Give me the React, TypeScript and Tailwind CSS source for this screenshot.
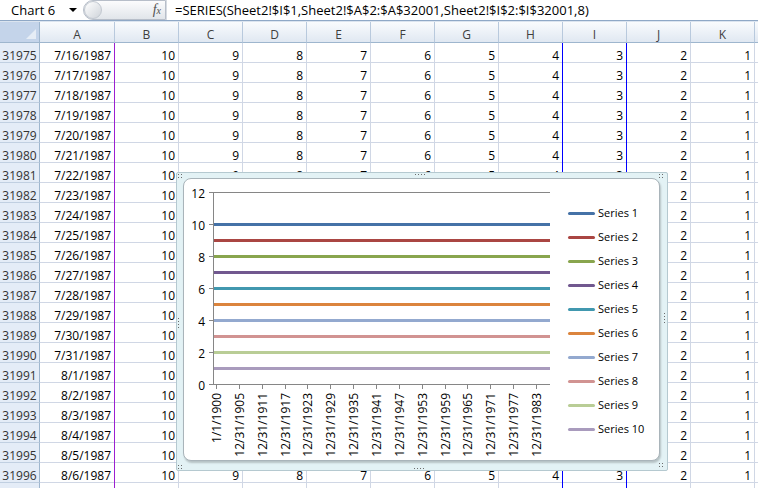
import React from "react";

const COLS = ["A", "B", "C", "D", "E", "F", "G", "H", "I", "J", "K"];
const ROWS = Array.from({ length: 23 }, (_, i) => 31975 + i);
const SERIES = [
  "#4572a7",
  "#aa4643",
  "#89a54e",
  "#71588f",
  "#4198af",
  "#db843d",
  "#93a9cf",
  "#d19392",
  "#b9cd96",
  "#a99bbd",
];
const XLABELS = [
  "1/1/1900",
  ...Array.from({ length: 14 }, (_, k) => `12/31/${1905 + 6 * k}`),
];

function dateFor(i: number) {
  const d = new Date(Date.UTC(1987, 6, 16 + i));
  return `${d.getUTCMonth() + 1}/${d.getUTCDate()}/${d.getUTCFullYear()}`;
}

function Dots({ vertical, className }: { vertical?: boolean; className: string }) {
  return (
    <div className={`absolute flex ${vertical ? "flex-col" : "flex-row"} gap-[2px] ${className}`}>
      {[0, 1, 2, 3].map((i) => (
        <span key={i} className="block w-[1px] h-[1px] bg-[#6b6b6b]" />
      ))}
    </div>
  );
}

function Corner({ className }: { className: string }) {
  return (
    <div className={`absolute grid grid-cols-2 gap-[2px] ${className}`}>
      {[0, 1, 2, 3].map((i) => (
        <span key={i} className="block w-[1px] h-[1px] bg-[#6b6b6b]" />
      ))}
    </div>
  );
}

function Chart() {
  const yOf = (v: number) => 206 - 16 * v;
  return (
    <div className="absolute left-[176px] top-[172px] w-[492px] h-[299px] border border-[#b5c9d0] bg-[#e3f2f5] rounded-[2px] pl-[6px] pt-[5px]">
      <Corner className="left-[1px] top-[1px]" />
      <Dots className="left-[238px] top-[1px]" />
      <Corner className="left-[482px] top-[1px]" />
      <Dots vertical className="left-[1px] top-[145px]" />
      <Dots vertical className="left-[487px] top-[140px]" />
      <Corner className="left-[1px] top-[292px]" />
      <Dots className="left-[237px] top-[295px]" />
      <Corner className="left-[482px] top-[290px]" />
      <div className="w-[477px] h-[283px] bg-white rounded-[8px] border border-[#a9b4ba] shadow-[1px_2px_2px_rgba(0,0,0,0.2)] flex flex-row overflow-hidden">
        <svg width={385} height={281} className="shrink-0 -mt-[1px] -ml-[1px]" style={{ fontFamily: "'Open Sans', sans-serif" }}>
          {[12, 10, 8, 6, 4, 2].map((v) => (
            <line key={v} x1={30} x2={367} y1={yOf(v) + 0.5} y2={yOf(v) + 0.5} stroke="#868686" strokeWidth={1} />
          ))}
          {[12, 10, 8, 6, 4, 2, 0].map((v) => (
            <line key={"t" + v} x1={26} x2={30} y1={yOf(v) + 0.5} y2={yOf(v) + 0.5} stroke="#868686" strokeWidth={1} />
          ))}
          <line x1={30.5} x2={30.5} y1={14} y2={207} stroke="#868686" strokeWidth={1} />
          <line x1={30} x2={367} y1={206.5} y2={206.5} stroke="#868686" strokeWidth={1} />
          {XLABELS.map((_, i) => {
            const x = Math.round(33 + 22.86 * i) + 0.5;
            return <line key={"x" + i} x1={x} x2={x} y1={206} y2={211} stroke="#868686" strokeWidth={1} />;
          })}
          {SERIES.map((c, k) => (
            <line key={c} x1={31} x2={367} y1={yOf(10 - k) + 0.5} y2={yOf(10 - k) + 0.5} stroke={c} strokeWidth={3} />
          ))}
          {[12, 10, 8, 6, 4, 2, 0].map((v) => (
            <text key={"l" + v} x={22} y={yOf(v) + 1} textAnchor="end" dominantBaseline="central" fontSize={12} fill="#000">
              {v}
            </text>
          ))}
          {XLABELS.map((t, i) => {
            const x = 33.5 + 22.86 * i;
            return (
              <text
                key={t}
                transform={`translate(${x} 215) rotate(-90)`}
                textAnchor="end"
                dominantBaseline="central"
                fontSize={12}
                fill="#000"
              >
                {t}
              </text>
            );
          })}
        </svg>
        <div className="flex flex-col pt-[22px]">
          {SERIES.map((c, k) => (
            <div key={c} className="h-[24px] flex flex-row items-center gap-[3px]">
              <span className="block w-[27px] h-[3px] rounded-full" style={{ backgroundColor: c }} />
              <span className="text-[11px] leading-[12px] text-black">Series {k + 1}</span>
            </div>
          ))}
        </div>
      </div>
    </div>
  );
}

export default function App() {
  return (
    <div className="relative w-[758px] h-[488px] overflow-hidden bg-white font-['Open_Sans',sans-serif] text-black">
      {/* Formula bar */}
      <div className="h-[20px] flex flex-row items-stretch bg-white">
        <div className="w-[83px] flex flex-row items-center pl-[11px] pr-[6px]">
          <span className="text-[13px] leading-[20px] text-black flex-1">Chart 6</span>
          <span className="block w-0 h-0 border-l-[4px] border-r-[4px] border-t-[4px] border-l-transparent border-r-transparent border-t-black" />
        </div>
        <div className="w-[83px] h-[20px] rounded-l-full border border-[#b7bec9] bg-linear-to-b from-[#fcfcfd] to-[#e1e5ea] flex flex-row items-center pr-[4px]">
          <span className="block w-[18px] h-[18px] rounded-full border border-[#c2c8d0] bg-linear-to-br from-[#ffffff] to-[#cfd4da]" />
          <span className="flex-1" />
          <span className="font-['Liberation_Serif',serif] italic text-[#505050] text-[14px] leading-[14px]">
            f<span className="text-[10px]">x</span>
          </span>
        </div>
        <div className="flex-1 pl-[8px] text-[13px] leading-[20px] text-black whitespace-nowrap border-l border-[#d6dbe2]">
          =SERIES(Sheet2!$I$1,Sheet2!$A$2:$A$32001,Sheet2!$I$2:$I$32001,8)
        </div>
      </div>
      <div className="h-[2px] border-t border-[#8fa8c6] bg-[#dbe4ef]" />

      {/* Grid */}
      <div className="grid grid-cols-[40px_75px_repeat(10,64px)_1fr]">
        <div className="h-[21px] border-r border-b border-[#9eb6ce] bg-[#c4d4ea] relative">
          <span className="absolute right-[3px] bottom-[3px] block w-[10px] h-[10px] bg-[#e6edf6] [clip-path:polygon(100%_0,100%_100%,0_100%)]" />
        </div>
        {COLS.map((c) => (
          <div
            key={c}
            className="h-[21px] border-r border-b border-r-[#b8c9dd] border-b-[#9eb6ce] bg-linear-to-b from-[#f9fbfd] to-[#e0e8f2] flex items-end justify-center pb-[1px] text-[12px] leading-[12px] text-[#3e3e3e]"
          >
            {c}
          </div>
        ))}
        <div className="h-[21px] border-b border-[#9eb6ce] bg-linear-to-b from-[#f9fbfd] to-[#e0e8f2]" />

        {ROWS.map((r, i) => {
          const partial = i >= 22;
          return (
            <React.Fragment key={r}>
              <div className="h-[20px] border-r border-b border-r-[#9eb6ce] border-b-[#c0cfe1] bg-[#e4ecf7] flex items-end justify-center text-[12px] leading-[12px] text-[#333]">
                {partial ? "" : r}
              </div>
              <div className="h-[20px] border-r border-b border-[#d0d7e5] flex items-end justify-end pr-[3px] text-[12px] leading-[12px]">
                {partial ? "" : dateFor(i)}
              </div>
              {[10, 9, 8, 7, 6, 5, 4, 3, 2, 1].map((v, ci) => {
                const hidden = partial || (i >= 7 && i <= 20 && ci >= 1 && ci <= 7);
                return (
                  <div key={v} className="h-[20px] border-r border-b border-[#d0d7e5] flex items-end justify-end pr-[3px] text-[12px] leading-[12px]">
                    {hidden ? "" : v}
                  </div>
                );
              })}
              <div className="h-[20px] border-b border-[#d0d7e5]" />
            </React.Fragment>
          );
        })}
      </div>

      {/* Range highlight lines */}
      <div className="absolute left-[114px] top-[43px] bottom-0 w-[1px] bg-[#9b1fd1]" />
      <div className="absolute left-[562px] top-[43px] bottom-0 w-[1px] bg-[#0000ff]" />
      <div className="absolute left-[626px] top-[43px] bottom-0 w-[1px] bg-[#0000ff]" />

      <Chart />
    </div>
  );
}
